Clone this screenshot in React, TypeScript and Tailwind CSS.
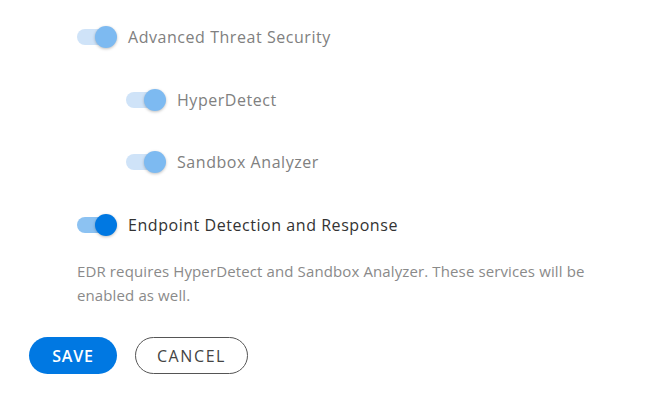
import React from "react";

type ToggleProps = { on: boolean; disabled?: boolean };

const Toggle = ({ disabled }: ToggleProps) => {
  const track = disabled ? "bg-[#cfe3f8]" : "bg-[#8cc2f2]";
  const knob = disabled ? "bg-[#7dbaf1]" : "bg-[#0078e2]";
  return (
    <div className="relative h-[22px] w-[42px] shrink-0">
      <div className={`absolute left-0 top-[3px] h-[16px] w-[36px] rounded-full ${track}`} />
      <div
        className={`absolute left-[18px] top-0 h-[22px] w-[22px] rounded-full shadow-[0_1px_3px_rgba(0,0,0,0.25)] ${knob}`}
      />
    </div>
  );
};

const Row = ({ label, disabled, indent }: { label: string; disabled?: boolean; indent?: boolean }) => (
  <div className={`flex h-[22px] items-center gap-[9px] ${indent ? "pl-[49px]" : ""}`}>
    <Toggle on disabled={disabled} />
    <span
      className={`text-[16px] tracking-[0.55px] ${disabled ? "text-[#808080]" : "text-[#333333]"}`}
    >
      {label}
    </span>
  </div>
);

const App = () => {
  return (
    <div
      className="h-[403px] w-[650px] bg-white pl-[29px] pt-[26px]"
      style={{ fontFamily: '"Open Sans", "Liberation Sans", sans-serif' }}
    >
      <div className="flex flex-col pl-[48px]">
        <Row label="Advanced Threat Security" disabled />
        <div className="mt-[41px] flex flex-col gap-[40px]">
          <Row label="HyperDetect" disabled indent />
          <Row label="Sandbox Analyzer" disabled indent />
        </div>
        <div className="mt-[41px]">
          <Row label="Endpoint Detection and Response" />
        </div>
        <p className="mt-[23px] w-[530px] text-[15px] leading-[24px] tracking-[0.12px] text-[#8a8a8a]">
          EDR requires HyperDetect and Sandbox Analyzer. These services will be enabled as well.
        </p>
      </div>
      <div className="mt-[30px] flex gap-[18px]">
        <button className="h-[37px] w-[88px] rounded-full bg-[#0078e2] text-[16px] font-semibold tracking-[0.8px] text-white">
          SAVE
        </button>
        <button className="h-[37px] w-[113px] rounded-full border border-[#555555] bg-white text-[16px] tracking-[1.6px] text-[#444444]">
          CANCEL
        </button>
      </div>
    </div>
  );
};

export default App;
